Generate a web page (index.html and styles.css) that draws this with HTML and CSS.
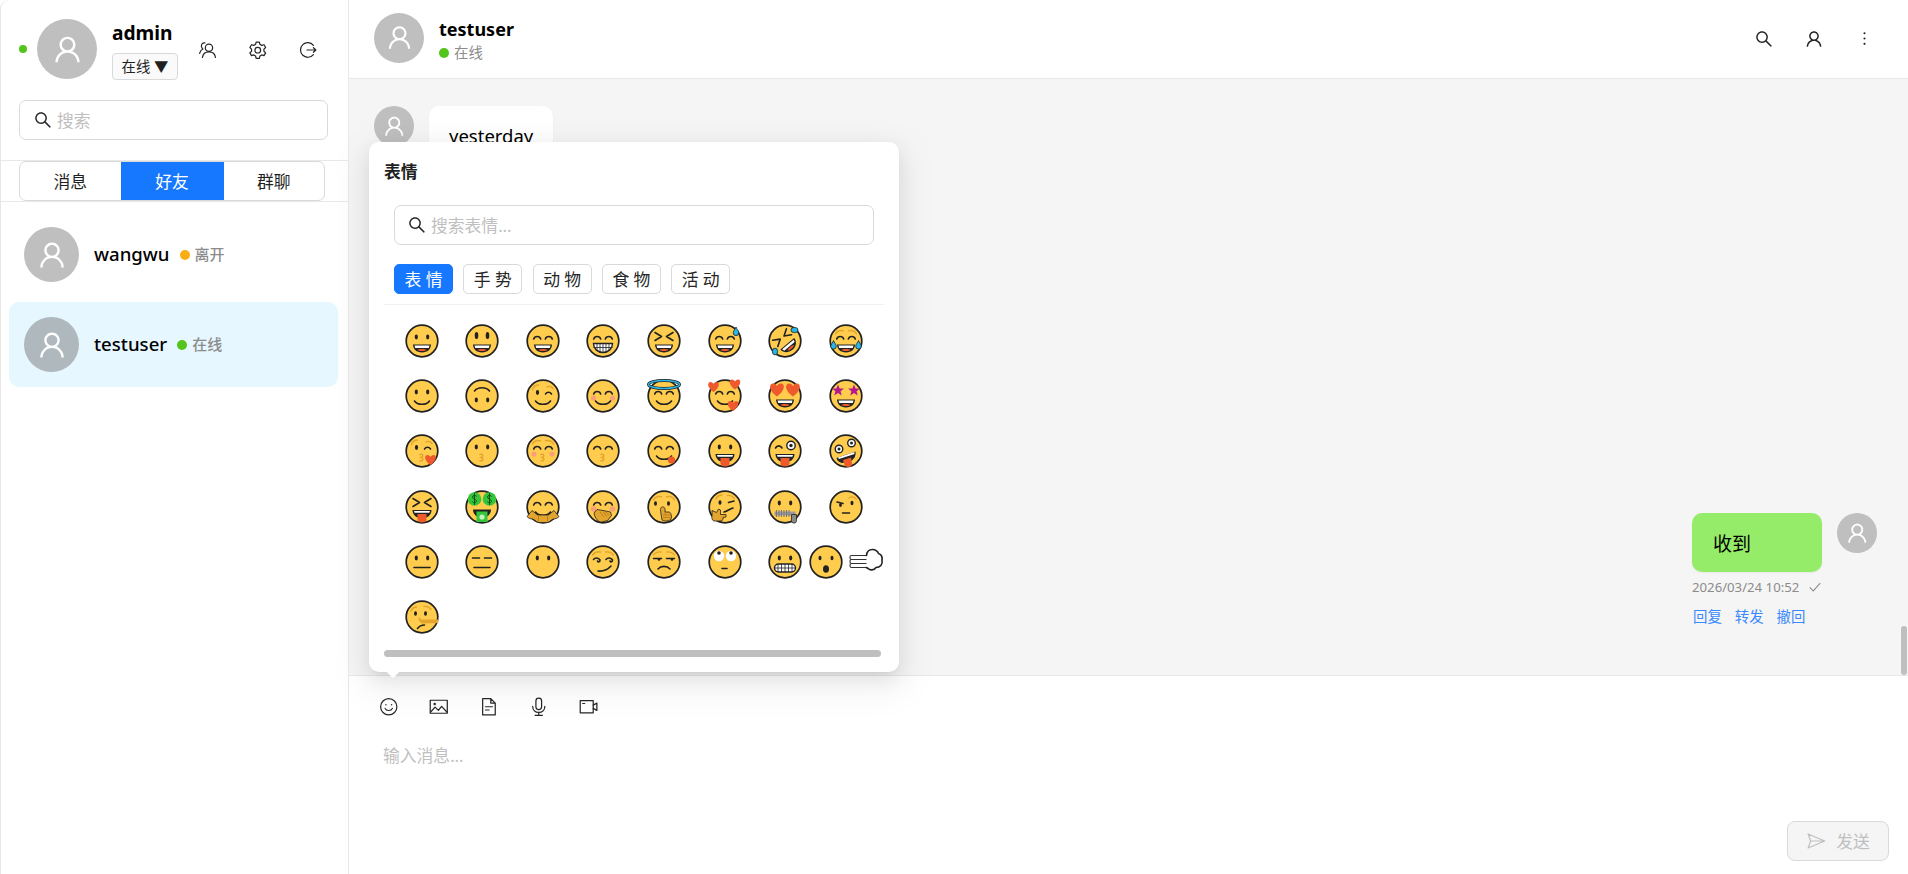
FILE: index.html
```html
<!DOCTYPE html>
<html lang="zh">
<head>
<meta charset="utf-8">
<title>聊天</title>
<link rel="stylesheet" href="styles.css">
</head>
<body>
<svg class="defs" aria-hidden="true" xmlns="http://www.w3.org/2000/svg">
<defs>
<path id="i-user" d="M858.5 763.6a374 374 0 0 0-80.6-119.5 375.63 375.63 0 0 0-119.5-80.6c-.4-.2-.8-.3-1.2-.5C719.5 518 760 444.7 760 362c0-137-111-248-248-248S264 225 264 362c0 82.7 40.5 156 102.8 201.1-.4.2-.8.3-1.2.5-44.8 18.9-85 46-119.5 80.6a375.63 375.63 0 0 0-80.6 119.5A371.7 371.7 0 0 0 136 901.8a8 8 0 0 0 8 8.2h60c4.4 0 7.9-3.5 8-7.8 2-77.2 33-149.5 87.8-204.3 56.7-56.7 132-87.9 212.2-87.9s155.5 31.2 212.2 87.9C779 752.7 810 825 812 902.2c.1 4.4 3.6 7.8 8 7.8h60a8 8 0 0 0 8-8.2c-1-47.8-10.9-94.3-29.5-138.2zM512 534c-45.9 0-89.1-17.9-121.6-50.4S340 407.9 340 362c0-45.9 17.9-89.1 50.4-121.6S466.1 190 512 190s89.1 17.9 121.6 50.4S684 316.1 684 362c0 45.9-17.9 89.1-50.4 121.6S557.9 534 512 534z"/>
<path id="i-search" d="M909.6 854.5L649.9 594.8C690.2 542.7 712 479 712 412c0-80.2-31.3-155.4-87.9-212.1-56.6-56.7-132-87.9-212.1-87.9s-155.5 31.3-212.1 87.9C143.2 256.5 112 331.8 112 412c0 80.1 31.3 155.5 87.9 212.1C256.5 680.8 331.8 712 412 712c67 0 130.6-21.8 182.7-62l259.7 259.6a8.2 8.2 0 0 0 11.6 0l43.6-43.5a8.2 8.2 0 0 0 0-11.6zM570.4 570.4C528 612.7 471.8 636 412 636s-116-23.3-158.4-65.6C211.3 528 188 471.8 188 412s23.3-116.1 65.6-158.4C296 211.3 352.2 188 412 188s116.1 23.2 158.4 65.6S636 352.2 636 412s-23.3 116.1-65.6 158.4z"/>

<circle id="f" class="em-face" cx="18" cy="18" r="15.8"/>
<g id="ed"><ellipse class="em-k" cx="12.3" cy="14" rx="1.6" ry="2.4"/><ellipse class="em-k" cx="23.7" cy="14" rx="1.6" ry="2.4"/></g>
<g id="ea"><path class="em-l" d="M8.7 16c1-3.4 6-3.4 7 0M20.3 16c1-3.4 6-3.4 7 0"/></g>
<g id="br"><path class="em-b" d="M7.5 11c1.5-3 5-4 8-3.2M28.5 11c-1.5-3-5-4-8-3.2"/></g>
<g id="mo"><path class="em-k" d="M9 21.5h18c0 4.400-3.500 8-9 8s-9-3.600-9-8z"/><path class="em-w" d="M10.500 22.500h15l-.7 2.400h-13.600z"/><path class="em-r" d="M13.500 27c1.500-1.400 7.500-1.400 9 0-1.500 1.300-7.500 1.300-9 0z"/></g>
<g id="sm"><path class="em-l" d="M10.500 23c3 4.400 12 4.400 15 0"/></g>
<g id="mt"><path class="em-k" d="M8.500 21h19c0 3.800-2.600 6.500-5 7.500h-9c-2.400-1-5-3.700-5-7.500z"/><path class="em-w" d="M10 22h16l-.6 1.800h-14.800z"/><path class="em-r" d="M13.500 25h9v5.500c0 2-2 3-4.500 3s-4.500-1-4.500-3z"/></g>
<path id="h" class="em-r" d="M0 5C-7 0-6-5-3-5-1.500-5-.5-4 0-3 .5-4 1.500-5 3-5 6-5 7 0 0 5z"/>
<polygon id="st" class="em-m" points="0,-6 1.600,-2 6,-1.900 2.600,.8 3.700,5 0,2.600 -3.700,5 -2.600,.8 -6,-1.900 -1.600,-2"/>
<path id="kiss" class="em-b" d="M16 21.500c3-.9 4 1.700 1 3 3.200 1 2 3.800-1 3.200"/>
<path id="xe" class="em-l" d="M9 9.500l6.500 4-6.500 4M27 9.500l-6.500 4 6.500 4"/>
<path id="dr" class="em-bl" d="M0-4C.5-2 2.800-.3 2.800 1.800a2.800 2.800 0 0 1-5.600 0C-2.800-.3-.5-2 0-4z"/>
<path id="dol" class="em-l2" d="M2-2.800C1-4.300-2-3.800-2-2S2 .5 2 2.200-1 4.500-2 2.800M0-5.500V5.500"/>

<g id="e1"><use href="#f"/><use href="#ed"/><use href="#mo"/></g>
<g id="e2"><use href="#f"/><ellipse class="em-k" cx="12.500" cy="12.500" rx="1.800" ry="3.600"/><ellipse class="em-k" cx="23.500" cy="12.500" rx="1.800" ry="3.600"/><use href="#mo"/></g>
<g id="e3"><use href="#f"/><use href="#ea"/><use href="#mo"/></g>
<g id="e4"><use href="#f"/><use href="#ea"/><path class="em-wl" d="M8.500 20.500h19c0 5-4 9-9.500 9s-9.500-4-9.500-9z"/><path class="em-t" d="M8.500 24.500h19M12 20.500v7.500M15 20.500v8.500M18 20.500v9M21 20.500v8.500M24 20.500v7.500"/></g>
<g id="e5"><use href="#f"/><use href="#xe"/><use href="#mo"/></g>
<g id="e6"><use href="#f"/><use href="#ea"/><use href="#mo"/><use href="#dr" transform="translate(29 8)"/></g>
<g id="e7"><use href="#f"/><g transform="rotate(-40 18 18)"><use href="#xe"/><use href="#mo"/></g><ellipse class="em-bl" cx="27.500" cy="7" rx="3.600" ry="2.600"/><ellipse class="em-bl" cx="8" cy="28.500" rx="2.600" ry="3.400"/></g>
<g id="e8"><use href="#f"/><use href="#br"/><use href="#ea"/><use href="#mo"/><use href="#dr" transform="translate(5.500 21.500)"/><use href="#dr" transform="translate(30.500 21.500)"/></g>

<g id="e9"><use href="#f"/><use href="#ed"/><use href="#sm"/></g>
<g id="e10"><use href="#f"/><g transform="rotate(180 18 18)"><use href="#ed"/><use href="#sm"/></g></g>
<g id="e11"><use href="#f"/><path class="em-b" d="M7.500 11.500c1-3 3.500-4.500 6-4.500M22 9c2-1 4.500-.5 6 1.500"/><ellipse class="em-k" cx="12.500" cy="14.500" rx="1.600" ry="2.400"/><path class="em-l" d="M20.500 16c1.500-2.400 4.500-2.400 6 0"/><use href="#sm"/></g>
<g id="e12"><use href="#f"/><circle class="em-c" cx="8.500" cy="20" r="2.600"/><circle class="em-c" cx="27.500" cy="20" r="2.600"/><use href="#ea"/><use href="#sm"/></g>
<g id="e13"><use href="#f"/><use href="#ea"/><use href="#sm"/><ellipse class="em-halo-o" cx="18" cy="6.500" rx="15.500" ry="4"/><ellipse class="em-halo" cx="18" cy="6.500" rx="15.500" ry="4"/></g>
<g id="e14"><use href="#f"/><use href="#ea"/><use href="#sm"/><use href="#h" transform="translate(6.500 9)"/><use href="#h" transform="translate(28 6.500)"/><use href="#h" transform="translate(26 28)"/></g>
<g id="e15"><use href="#f"/><use href="#h" transform="translate(10 12) scale(1.300)"/><use href="#h" transform="translate(26 12) scale(1.300)"/><use href="#mo"/></g>
<g id="e16"><use href="#f"/><use href="#st" transform="translate(10 12.500)"/><use href="#st" transform="translate(26 12.500)"/><use href="#mo"/></g>

<g id="e17"><use href="#f"/><path class="em-b" d="M7.500 11.500c1-3 3.500-4.500 6-4.500M22 9c2-1 4.500-.5 6 1.500"/><ellipse class="em-k" cx="12.500" cy="14.500" rx="1.600" ry="2.400"/><path class="em-l" d="M20.500 16c1.500-2.400 4.500-2.400 6 0"/><use href="#kiss"/><use href="#h" transform="translate(26.500 27)"/></g>
<g id="e18"><use href="#f"/><use href="#ed"/><use href="#kiss"/></g>
<g id="e19"><use href="#f"/><use href="#br"/><use href="#ea"/><circle class="em-c" cx="9" cy="21" r="2.600"/><circle class="em-c" cx="27" cy="21" r="2.600"/><use href="#kiss"/></g>
<g id="e20"><use href="#f"/><use href="#ea"/><use href="#kiss"/></g>
<g id="e21"><use href="#f"/><use href="#ea"/><use href="#sm"/><circle class="em-r" cx="25.500" cy="27" r="3.600"/></g>
<g id="e22"><use href="#f"/><use href="#ed"/><use href="#mt"/></g>
<g id="e23"><use href="#f"/><path class="em-l" d="M8.500 15c1.500-2.800 5-2.800 6.500 0"/><circle class="em-wl" cx="24" cy="12.500" r="4.200"/><circle class="em-k" cx="24" cy="12.500" r="1.700"/><use href="#mt"/></g>
<g id="e24"><use href="#f"/><circle class="em-wl" cx="11" cy="16" r="3.800"/><circle class="em-k" cx="11" cy="16" r="1.500"/><circle class="em-wl" cx="23.500" cy="10" r="3.800"/><circle class="em-k" cx="23.500" cy="10" r="1.500"/><path class="em-k" d="M8.500 25l19-6.500c.8 4.500-2 8.500-5.500 10l-8 1.500c-3-.5-5-2.500-5.500-5z"/><path class="em-w" d="M10 24.500l16.300-5.400.2 2-15.500 5z"/><path class="em-r" d="M15 27l8-2.500 1 6c.3 2-1.500 3.500-3.800 3.500s-3.700-1-4-3z"/></g>

<g id="e25"><use href="#f"/><use href="#xe"/><use href="#mt"/></g>
<g id="e26"><use href="#f"/><circle class="em-g" cx="10.500" cy="10" r="6.800"/><circle class="em-g" cx="25.500" cy="10" r="6.800"/><use href="#dol" transform="translate(10.500 10)"/><use href="#dol" transform="translate(25.500 10)"/><path class="em-k" d="M9 20.500h18c0 3-1.500 5.500-4 7h-10c-2.500-1.500-4-4-4-7z"/><path class="em-g2" d="M12.500 22.500h11v10.500h-11z"/><circle class="em-g3" cx="18" cy="28" r="2.600"/></g>
<g id="e27"><use href="#f"/><use href="#ea"/><use href="#sm"/><path class="em-hand" d="M2 27.500l5-6 5.500 4.500h11l5.500-4.500 5 6c-1.500 2-4 2.500-6 2.500l-5 3.500h-10l-5-3.500c-2 0-4.500-.5-6-2.500z"/><path class="em-hl" d="M13.500 26v7M22.500 26v7"/></g>
<g id="e28"><use href="#f"/><circle class="em-c" cx="8.500" cy="20" r="2.800"/><circle class="em-c" cx="27.500" cy="20" r="2.800"/><use href="#ea"/><path class="em-hand" d="M9 24l3-3.500 6 1 7.500 1.500 1 3.500-4 5-6 1.500c-3 0-6.500-3-7.500-9z"/><path class="em-hl" d="M15 23l4 5M18 22.500l4 5M21 23l3 3.500"/></g>
<g id="e29"><use href="#f"/><use href="#br"/><ellipse class="em-k" cx="9.500" cy="14.500" rx="1.500" ry="2.300"/><ellipse class="em-k" cx="22.500" cy="14.500" rx="1.500" ry="2.300"/><path class="em-hand" d="M14.500 20.500c0-3.500 4.500-3.500 4.500 0v2.500h4.500c2 1.500 2.500 5 1.500 7.500-3 2-7 2-9 .5l-1-6z"/><path class="em-hl" d="M19 23v2.500M17 26h8M17 28.500h8"/></g>
<g id="e30"><use href="#f"/><path class="em-b" d="M9 10c1-2.500 3-4 6-4M20.500 6.500c3-.5 5.500 1 7 3"/><ellipse class="em-k" cx="13" cy="13.500" rx="1.500" ry="2.300"/><path class="em-l" d="M21.500 13.500l5.500-1.500M17 23c3-.5 5.500-3 9-4"/><path class="em-hand" d="M5 21.500l4.500 2 2-3.500 2 1v4.500h5.500v2.500l-3 .5v2l-2 1.500H7c-2-.5-2.500-3-2-5.500z"/></g>
<g id="e31"><use href="#f"/><use href="#ed"/><path class="em-zip" d="M7.500 22.500h21v4h-21z"/><path class="em-zt" d="M9.500 21v7M12 21v7M14.500 21v7M17 21v7M19.500 21v7M22 21v7"/><path class="em-zp" d="M24.500 25.500h5v6c0 2-1 2.500-2.500 2.500s-2.500-.5-2.500-2.500z"/></g>
<g id="e32"><use href="#f"/><path class="em-b" d="M21 9c2-1.500 5-1.500 7 1"/><path class="em-l" d="M9 13l6 1.500"/><ellipse class="em-k" cx="12.500" cy="16" rx="1.400" ry="2"/><ellipse class="em-k" cx="24" cy="14" rx="1.500" ry="2.200"/><path class="em-l" d="M14.500 24h7"/></g>

<g id="e33"><use href="#f"/><use href="#ed"/><path class="em-l" d="M10 23.500h16"/></g>
<g id="e34"><use href="#f"/><path class="em-l" d="M8.500 14h7M20.500 14h7M10 23.500h16"/></g>
<g id="e35"><use href="#f"/><use href="#ed"/></g>
<g id="e36"><use href="#f"/><path class="em-b" d="M7.500 11c2-2.500 5.500-3.500 8-3M20.500 8c3-.5 6 .5 8 3"/><path class="em-l" d="M8.500 15.500c1.500-2 5-2 6.500.5 0 2-1.700 2.500-2.500 1M21 15.500c1.500-2 5-2 6.500.5 0 2-1.700 2.500-2.500 1M13 27c5.500.5 9.500-1 13-5"/></g>
<g id="e37"><use href="#f"/><path class="em-b" d="M7.500 11c1.500-2.500 5-3.500 7.500-3M21 8c2.500-.5 6 .5 7.500 3"/><path class="em-l" d="M7.500 14.500h8M20.500 14.500h8M12 25c3-3.500 9-3.500 12 0"/><circle class="em-k" cx="13" cy="15.500" r="1.300"/><circle class="em-k" cx="26" cy="15.500" r="1.300"/></g>
<g id="e38"><use href="#f"/><circle class="em-w" cx="12" cy="12" r="5.200"/><circle class="em-w" cx="24" cy="12" r="5.200"/><circle class="em-k" cx="12" cy="9" r="1.800"/><circle class="em-k" cx="24" cy="9" r="1.800"/><path class="em-l" d="M15 24.500h5"/></g>
<g id="e39"><use href="#f"/><use href="#ed"/><rect class="em-wl" x="7.500" y="20" width="21" height="8" rx="4"/><path class="em-t" d="M7.500 24h21M11 20v8M14.500 20v8M18 20v8M21.500 20v8M25 20v8"/></g>
<g id="e40"><use href="#f"/><ellipse class="em-k" cx="12" cy="14" rx="1.500" ry="2.300"/><ellipse class="em-k" cx="24" cy="14" rx="1.500" ry="2.300"/><ellipse class="em-k" cx="18" cy="25" rx="3" ry="3.800"/></g>
<g id="e41"><rect class="em-bar" x="2" y="11.500" width="18" height="4" rx="1.500"/><rect class="em-bar" x="2" y="15.500" width="18" height="4" rx="1.500"/><rect class="em-bar" x="2" y="19.500" width="18" height="4" rx="1.500"/><path class="em-cloud" d="M18.500 11.500c.3-3.500 2.500-6 6-6s5 1.500 6 4c3 1 4 4 3.500 7 1 4-2 7-6 7-2 3-6 3-8 1-.7-.5-1.200-.6-1.500-1"/></g>
<g id="e42"><use href="#f"/><path class="em-b" d="M7 12c1-2.500 3-4 5.500-4M20 7.500c3-.5 5.500 .5 7 3"/><ellipse class="em-k" cx="11.500" cy="14.500" rx="1.500" ry="2.300"/><ellipse class="em-k" cx="21.500" cy="14.500" rx="1.500" ry="2.300"/><path class="em-nose" d="M14.500 18l3 2.500h16.500l.5 2-.5 1.500-16 .5-3-2.500z"/><path class="em-l" d="M13.500 29.500c1.500-2 4-3.500 7-3.500"/></g>
</defs>
</svg>

<div class="app">
  <aside class="sidebar">
    <div class="profile">
      <span class="dot dot--online"></span>
      <span class="avatar avatar--lg"><svg class="avatar-icon" viewBox="0 0 1024 1024"><use href="#i-user"/></svg></span>
      <div class="profile-info">
        <div class="profile-name">admin</div>
        <div class="status-select">在线 ▼</div>
      </div>
      <div class="profile-actions">
        <span class="icon-btn"><svg class="line-icon" viewBox="0 0 24 24"><circle cx="13.500" cy="9.500" r="4.500"/><path d="M5.500 21.500c.5-4.500 3.500-7 8-7s7.500 2.500 8 7M8.500 3.500C6 3 3.800 5 4.200 8c.2 1.300.9 2.300 1.800 3-2 1-3.500 3-4 5.500"/></svg></span>
        <span class="icon-btn"><svg class="line-icon" viewBox="0 0 24 24"><path d="M10 2.500h4l.7 2.800 2.200 1.300 2.800-.8 2 3.400-2.100 2v2.600l2.100 2-2 3.400-2.800-.8-2.200 1.300-.7 2.800h-4l-.7-2.800-2.200-1.300-2.800.8-2-3.400 2.100-2v-2.600l-2.100-2 2-3.400 2.800.8 2.200-1.300z"/><circle cx="12" cy="12.500" r="3.500"/></svg></span>
        <span class="icon-btn"><svg class="line-icon" viewBox="0 0 24 24"><path d="M19 6.500A9 9 0 1 0 19 18M11 12.300h11M19 9.500l3 2.800-3 2.800"/></svg></span>
      </div>
    </div>
    <div class="search-wrap">
      <div class="search-box"><svg class="search-icon" viewBox="0 0 1024 1024"><use href="#i-search"/></svg><span class="placeholder">搜索</span></div>
    </div>
    <div class="tabs-wrap">
      <div class="tabs">
        <div class="tab">消息</div>
        <div class="tab tab--active">好友</div>
        <div class="tab">群聊</div>
      </div>
    </div>
    <div class="contact-list">
      <div class="contact">
        <span class="avatar avatar--md"><svg class="avatar-icon" viewBox="0 0 1024 1024"><use href="#i-user"/></svg></span>
        <span class="contact-name">wangwu</span>
        <span class="dot dot--away dot--contact"></span>
        <span class="contact-status">离开</span>
      </div>
      <div class="contact contact--active">
        <span class="avatar avatar--md avatar--tint"><svg class="avatar-icon" viewBox="0 0 1024 1024"><use href="#i-user"/></svg></span>
        <span class="contact-name">testuser</span>
        <span class="dot dot--online-md dot--contact"></span>
        <span class="contact-status">在线</span>
      </div>
    </div>
  </aside>

  <main class="main">
    <header class="chat-header">
      <span class="avatar avatar--hd"><svg class="avatar-icon" viewBox="0 0 1024 1024"><use href="#i-user"/></svg></span>
      <div class="chat-title">
        <div class="chat-name">testuser</div>
        <div class="chat-status"><span class="dot dot--online-md"></span>在线</div>
      </div>
      <div class="chat-actions">
        <span class="icon-btn"><svg class="fill-icon" viewBox="0 0 1024 1024"><use href="#i-search"/></svg></span>
        <span class="icon-btn"><svg class="fill-icon" viewBox="0 0 1024 1024"><use href="#i-user"/></svg></span>
        <span class="icon-btn"><svg class="more-icon" viewBox="0 0 24 24"><circle cx="12" cy="4.500" r="1.500"/><circle cx="12" cy="12" r="1.500"/><circle cx="12" cy="19.500" r="1.500"/></svg></span>
      </div>
    </header>

    <section class="messages">
      <div class="msg">
        <span class="avatar avatar--sm"><svg class="avatar-icon" viewBox="0 0 1024 1024"><use href="#i-user"/></svg></span>
        <div class="bubble">yesterday</div>
      </div>
      <div class="msg msg--self">
        <div class="msg-body">
          <div class="bubble bubble--self">收到</div>
          <div class="msg-meta"><span>2026/03/24 10:52</span><svg class="check" viewBox="0 0 16 16"><path d="M2 8.500l4 4 8-9"/></svg></div>
          <div class="msg-actions"><span>回复</span><span>转发</span><span>撤回</span></div>
        </div>
        <span class="avatar avatar--sm"><svg class="avatar-icon" viewBox="0 0 1024 1024"><use href="#i-user"/></svg></span>
      </div>
      <div class="scroll-thumb"></div>
    </section>

    <section class="composer">
      <div class="toolbar">
        <span class="tool"><svg class="line-icon" viewBox="0 0 24 24"><circle cx="12" cy="12" r="10"/><path d="M7.500 14c1.500 3.500 7.500 3.500 9 0"/><circle class="dot-fill" cx="8.500" cy="9.500" r=".9"/><circle class="dot-fill" cx="15.500" cy="9.500" r=".9"/></svg></span>
        <span class="tool"><svg class="line-icon" viewBox="0 0 24 24"><rect x="1.500" y="4" width="21" height="16"/><path d="M2 18.500l5.500-6 4 4 4-5 6.500 7"/><circle class="dot-fill" cx="7" cy="8.500" r="1.500"/></svg></span>
        <span class="tool"><svg class="line-icon" viewBox="0 0 24 24"><path d="M4.500 2h10l5.500 5.500V22H4.500zM14.500 2v5.500H20M8 12h8.500M8 16h4.500"/></svg></span>
        <span class="tool"><svg class="line-icon" viewBox="0 0 24 24"><rect x="8.500" y="1.500" width="7" height="14" rx="3.500"/><path d="M4.500 11.500c0 4.500 3.200 7.500 7.500 7.500s7.500-3 7.500-7.500M12 19v3M7.500 22.500h9"/></svg></span>
        <span class="tool"><svg class="line-icon" viewBox="0 0 24 24"><rect x="1.500" y="4.500" width="16" height="15"/><path d="M17.500 10l4.500-2.500v9L17.500 14M4.500 8h2.500"/></svg></span>
      </div>
      <div class="composer-input">输入消息...</div>
      <div class="composer-foot">
        <div class="send-btn"><svg class="send-icon" viewBox="0 0 24 24"><path d="M2.500 3.500l20 8.500-20 8.500 3-8.500zM5.500 12h17"/></svg><span>发送</span></div>
      </div>
    </section>

    <div class="popup">
      <div class="popup-title">表情</div>
      <div class="popup-search">
        <div class="search-box search-box--popup"><svg class="search-icon" viewBox="0 0 1024 1024"><use href="#i-search"/></svg><span class="placeholder">搜索表情...</span></div>
      </div>
      <div class="cats">
        <span class="cat cat--active">表 情</span>
        <span class="cat">手 势</span>
        <span class="cat">动 物</span>
        <span class="cat">食 物</span>
        <span class="cat">活 动</span>
      </div>
      <div class="emoji-list">
        <div class="emoji-row">
          <span class="emoji-cell"><svg class="emoji" viewBox="0 0 36 36"><use href="#e1"/></svg></span>
          <span class="emoji-cell"><svg class="emoji" viewBox="0 0 36 36"><use href="#e2"/></svg></span>
          <span class="emoji-cell"><svg class="emoji" viewBox="0 0 36 36"><use href="#e3"/></svg></span>
          <span class="emoji-cell"><svg class="emoji" viewBox="0 0 36 36"><use href="#e4"/></svg></span>
          <span class="emoji-cell"><svg class="emoji" viewBox="0 0 36 36"><use href="#e5"/></svg></span>
          <span class="emoji-cell"><svg class="emoji" viewBox="0 0 36 36"><use href="#e6"/></svg></span>
          <span class="emoji-cell"><svg class="emoji" viewBox="0 0 36 36"><use href="#e7"/></svg></span>
          <span class="emoji-cell"><svg class="emoji" viewBox="0 0 36 36"><use href="#e8"/></svg></span>
        </div>
        <div class="emoji-row">
          <span class="emoji-cell"><svg class="emoji" viewBox="0 0 36 36"><use href="#e9"/></svg></span>
          <span class="emoji-cell"><svg class="emoji" viewBox="0 0 36 36"><use href="#e10"/></svg></span>
          <span class="emoji-cell"><svg class="emoji" viewBox="0 0 36 36"><use href="#e11"/></svg></span>
          <span class="emoji-cell"><svg class="emoji" viewBox="0 0 36 36"><use href="#e12"/></svg></span>
          <span class="emoji-cell"><svg class="emoji" viewBox="0 0 36 36"><use href="#e13"/></svg></span>
          <span class="emoji-cell"><svg class="emoji" viewBox="0 0 36 36"><use href="#e14"/></svg></span>
          <span class="emoji-cell"><svg class="emoji" viewBox="0 0 36 36"><use href="#e15"/></svg></span>
          <span class="emoji-cell"><svg class="emoji" viewBox="0 0 36 36"><use href="#e16"/></svg></span>
        </div>
        <div class="emoji-row">
          <span class="emoji-cell"><svg class="emoji" viewBox="0 0 36 36"><use href="#e17"/></svg></span>
          <span class="emoji-cell"><svg class="emoji" viewBox="0 0 36 36"><use href="#e18"/></svg></span>
          <span class="emoji-cell"><svg class="emoji" viewBox="0 0 36 36"><use href="#e19"/></svg></span>
          <span class="emoji-cell"><svg class="emoji" viewBox="0 0 36 36"><use href="#e20"/></svg></span>
          <span class="emoji-cell"><svg class="emoji" viewBox="0 0 36 36"><use href="#e21"/></svg></span>
          <span class="emoji-cell"><svg class="emoji" viewBox="0 0 36 36"><use href="#e22"/></svg></span>
          <span class="emoji-cell"><svg class="emoji" viewBox="0 0 36 36"><use href="#e23"/></svg></span>
          <span class="emoji-cell"><svg class="emoji" viewBox="0 0 36 36"><use href="#e24"/></svg></span>
        </div>
        <div class="emoji-row">
          <span class="emoji-cell"><svg class="emoji" viewBox="0 0 36 36"><use href="#e25"/></svg></span>
          <span class="emoji-cell"><svg class="emoji" viewBox="0 0 36 36"><use href="#e26"/></svg></span>
          <span class="emoji-cell"><svg class="emoji" viewBox="0 0 36 36"><use href="#e27"/></svg></span>
          <span class="emoji-cell"><svg class="emoji" viewBox="0 0 36 36"><use href="#e28"/></svg></span>
          <span class="emoji-cell"><svg class="emoji" viewBox="0 0 36 36"><use href="#e29"/></svg></span>
          <span class="emoji-cell"><svg class="emoji" viewBox="0 0 36 36"><use href="#e30"/></svg></span>
          <span class="emoji-cell"><svg class="emoji" viewBox="0 0 36 36"><use href="#e31"/></svg></span>
          <span class="emoji-cell"><svg class="emoji" viewBox="0 0 36 36"><use href="#e32"/></svg></span>
        </div>
        <div class="emoji-row">
          <span class="emoji-cell"><svg class="emoji" viewBox="0 0 36 36"><use href="#e33"/></svg></span>
          <span class="emoji-cell"><svg class="emoji" viewBox="0 0 36 36"><use href="#e34"/></svg></span>
          <span class="emoji-cell"><svg class="emoji" viewBox="0 0 36 36"><use href="#e35"/></svg></span>
          <span class="emoji-cell"><svg class="emoji" viewBox="0 0 36 36"><use href="#e36"/></svg></span>
          <span class="emoji-cell"><svg class="emoji" viewBox="0 0 36 36"><use href="#e37"/></svg></span>
          <span class="emoji-cell"><svg class="emoji" viewBox="0 0 36 36"><use href="#e38"/></svg></span>
          <span class="emoji-cell"><svg class="emoji" viewBox="0 0 36 36"><use href="#e39"/></svg></span>
          <span class="emoji-cell emoji-cell--tight emoji-cell--pull"><svg class="emoji" viewBox="0 0 36 36"><use href="#e40"/></svg></span>
          <span class="emoji-cell emoji-cell--tight"><svg class="emoji" viewBox="0 0 36 36"><use href="#e41"/></svg></span>
        </div>
        <div class="emoji-row">
          <span class="emoji-cell"><svg class="emoji" viewBox="0 0 36 36"><use href="#e42"/></svg></span>
        </div>
      </div>
      <div class="popup-scroll"><div class="popup-scroll-thumb"></div></div>
      <span class="popup-arrow"></span>
    </div>
  </main>
</div>
</body>
</html>
```

FILE: styles.css
```css
* { box-sizing: border-box; }
html, body { margin: 0; height: 100%; background: #fff; overflow: hidden; }
body {
  font-family: "Noto Sans", "Noto Sans CJK SC", sans-serif;
  font-size: 16.8px;
  color: #000;
}
.defs { display: block; width: 0; height: 0; }

.app { display: flex; height: 874px; overflow: hidden; border-radius: 9px 9px 0 0; box-shadow: inset 1px 0 0 #e6e6e6; }

/* ---------- sidebar ---------- */
.sidebar { width: 349px; flex: none; border-right: 1px solid #e8e8e8; display: flex; flex-direction: column; }
.profile { display: flex; align-items: center; height: 100px; padding: 0 0 2px 19px; }
.profile-info { margin: 2px 0 0 15px; width: 66px; display: flex; flex-direction: column; gap: 8px; }
.profile-name { font-weight: 700; font-size: 19.2px; line-height: 25px; }
.status-select {
  height: 27px; line-height: 25px; border: 1px solid #d9d9d9; border-radius: 4px; background: #fafafa;
  font-size: 14.4px; text-align: center; color: #1f1f1f; white-space: nowrap;
}
.profile-actions { display: flex; margin: 2px 0 0 5px; }
.icon-btn { width: 50px; display: flex; justify-content: center; align-items: center; }
.line-icon { width: 19.5px; height: 19.5px; fill: none; stroke: #262626; stroke-width: 1.5; stroke-linejoin: round; stroke-linecap: round; }
.line-icon .dot-fill { fill: #262626; stroke: none; }
.fill-icon { width: 20px; height: 20px; fill: #262626; }
.more-icon { width: 17px; height: 17px; fill: #262626; }

.avatar { display: flex; align-items: center; justify-content: center; border-radius: 50%; background: #bfbfbf; flex: none; }
.avatar-icon { fill: #fff; }
.avatar--lg { width: 60px; height: 60px; margin-left: 10px; }
.avatar--lg .avatar-icon { width: 33px; height: 33px; }
.avatar--md { width: 55px; height: 55px; }
.avatar--md .avatar-icon { width: 32px; height: 32px; }
.avatar--hd { width: 50px; height: 50px; }
.avatar--hd .avatar-icon { width: 29px; height: 29px; }
.avatar--sm { width: 40px; height: 40px; }
.avatar--sm .avatar-icon { width: 24.5px; height: 24.5px; }
.avatar--tint { background: #aeb8bd; }

.dot { display: inline-block; border-radius: 50%; flex: none; }
.dot--online { width: 8px; height: 8px; background: #52c41a; }
.dot--online-md { width: 10px; height: 10px; background: #52c41a; }
.dot--away { width: 10px; height: 10px; background: #faad14; }

.search-wrap { padding: 0 20px 20.5px 19px; }
.search-box {
  height: 39.5px; display: flex; align-items: center; gap: 4px; padding: 0 13px;
  border: 1px solid #d9d9d9; border-radius: 7px; background: #fff;
}
.search-box--popup { padding: 0 12px; }
.search-icon { width: 20px; height: 20px; fill: #262626; flex: none; }
.placeholder { color: #bfbfbf; font-size: 16.8px; }

.tabs-wrap { border-top: 1px solid #e8e8e8; border-bottom: 1px solid #e8e8e8; padding: 0 23px 0 19px; height: 42px; }
.tabs { display: flex; height: 40px; border: 1px solid #d9d9d9; border-radius: 7px; overflow: hidden; }
.tab { flex: 1; display: flex; align-items: center; justify-content: center; font-size: 16.8px; color: #1f1f1f; }
.tab--active { background: #1677ff; color: #fff; flex: none; width: 103px; }

.contact-list { padding: 10px 0 0 9px; display: flex; flex-direction: column; gap: 5px; }
.contact { width: 329px; height: 85px; display: flex; align-items: center; padding-left: 15px; border-radius: 10px; }
.contact--active { background: #e6f7ff; }
.contact-name { margin: 0 0 2px 15px; font-size: 18.6px; font-weight: 500; }
.dot--contact { margin-left: 10px; }
.contact-status { margin: 0 0 2px 5px; font-size: 15px; font-weight: 500; color: #8c8c8c; }

/* ---------- main ---------- */
.main { flex: 1; min-width: 0; display: flex; flex-direction: column; position: relative; }
.chat-header { height: 79px; flex: none; display: flex; align-items: center; padding: 0 19px 3px 25px; border-bottom: 1px solid #e8e8e8; }
.chat-title { margin: 5px 0 0 15px; display: flex; flex-direction: column; }
.chat-name { font-weight: 700; font-size: 18px; line-height: 25px; }
.chat-status { display: flex; align-items: center; gap: 5px; font-size: 14.4px; line-height: 22px; color: #8c8c8c; }
.chat-actions { display: flex; margin: 2px 0 0 auto; }

.messages {
  flex: 1; min-height: 0; background: #f5f5f5; position: relative;
  display: flex; flex-direction: column; justify-content: space-between;
  padding: 27px 31px 48px 25px;
}
.msg { display: flex; gap: 15px; align-items: flex-start; }
.msg--self { justify-content: flex-end; }
.msg-body { display: flex; flex-direction: column; }
.bubble {
  height: 59px; display: flex; align-items: center; padding: 0 20px; background: #fff; border-radius: 10px;
  font-size: 18.5px; box-shadow: 0 1px 2px rgba(0,0,0,.05);
}
.bubble--self { width: 130px; background: #95ec69; padding: 0 21px; font-size: 19px; }
.msg-meta { display: flex; align-items: center; justify-content: space-between; margin-top: 5px; font-size: 13.2px; line-height: 20px; color: #8c8c8c; }
.check { width: 14px; height: 14px; fill: none; stroke: #8c8c8c; stroke-width: 1.2; }
.msg-actions { display: flex; gap: 13px; margin-top: 10px; padding-left: 1px; font-size: 14.4px; line-height: 20px; color: #1677ff; opacity: .85; }
.scroll-thumb { position: absolute; right: 1px; bottom: 0; width: 6px; height: 49px; background: #bfbfbf; border-radius: 3px; }

.composer { height: 199px; flex: none; border-top: 1px solid #e8e8e8; display: flex; flex-direction: column; background: #fff; }
.toolbar { display: flex; padding: 14px 0 0 15px; }
.tool { width: 50px; height: 34px; display: flex; align-items: center; justify-content: center; }
.composer-input { padding: 15px 0 0 34px; font-size: 16.8px; line-height: 34px; color: #bfbfbf; }
.composer-foot { margin-top: auto; display: flex; justify-content: flex-end; padding: 0 19px 13px 0; }
.send-btn {
  width: 102px; height: 40px; display: flex; align-items: center; justify-content: center; gap: 10px;
  background: #f5f5f5; border: 1px solid #d9d9d9; border-radius: 8px; color: #bfbfbf; font-size: 16.8px;
}
.send-icon { width: 20px; height: 20px; fill: none; stroke: #bfbfbf; stroke-width: 1.4; stroke-linejoin: round; }

/* ---------- popup ---------- */
.popup {
  position: absolute; left: 20px; top: 142px; width: 530px; height: 530px; background: #fff; border-radius: 10px; z-index: 10;
  box-shadow: 0 7px 19px rgba(0,0,0,.08), 0 4px 7px -5px rgba(0,0,0,.12), 0 11px 34px 10px rgba(0,0,0,.05);
}
.popup-title { padding: 17px 0 0 15px; font-size: 16.8px; font-weight: 700; line-height: 25px; color: #1f1f1f; }
.popup-search { padding: 21px 25px 0 25px; }
.cats { display: flex; gap: 10.3px; margin: 19.5px 15px 0; padding: 0 10px 10px; border-bottom: 1px solid #f0f0f0; height: 41px; }
.cat {
  height: 30px; width: 59px; display: flex; align-items: center; justify-content: center; border: 1px solid #d9d9d9; border-radius: 5px;
  font-size: 16.8px; color: #262626; white-space: pre;
}
.cat--active { background: #1677ff; border-color: #1677ff; color: #fff; }
.emoji-list { padding: 8.5px 0 0 22.4px; }
.emoji-row { display: flex; height: 55.2px; align-items: center; }
.emoji-cell { width: 60.6px; flex: none; display: flex; justify-content: center; align-items: center; }
.emoji-cell--tight { width: 40.4px; }
.emoji-cell--pull { margin-left: -9.8px; }
.emoji { width: 36px; height: 36px; display: block; overflow: visible; }

.popup-scroll { margin: 5.3px 15px 0; height: 7px; }
.popup-scroll-thumb { width: 497px; height: 7px; border-radius: 4px; background: #bfbfbf; }
.popup-arrow { position: absolute; left: 17px; bottom: -6px; width: 14px; height: 14px; background: #fff; transform: rotate(45deg) scale(.72); }

/* ---------- emoji paint ---------- */
.em-face { fill: #ffcc4d; stroke: #222; stroke-width: 1.7; }
.em-k { fill: #222; }
.em-w { fill: #fff; }
.em-r { fill: #ee5a2c; }
.em-m { fill: #b5178e; }
.em-c { fill: #f9a07a; }
.em-g { fill: #35c53a; }
.em-g2 { fill: #35c53a; }
.em-g3 { fill: #c6f0c0; }
.em-l { fill: none; stroke: #222; stroke-width: 1.6; stroke-linecap: round; stroke-linejoin: round; }
.em-l2 { fill: none; stroke: #14501a; stroke-width: 1; stroke-linecap: round; }
.em-b { fill: none; stroke: #e3a52e; stroke-width: 1.4; stroke-linecap: round; }
.em-bl { fill: #29b6e8; stroke: #222; stroke-width: .8; }
.em-wl { fill: #fff; stroke: #222; stroke-width: 1.4; }
.em-t { fill: none; stroke: #222; stroke-width: .8; }
.em-halo-o { fill: none; stroke: #222; stroke-width: 3; }
.em-halo { fill: none; stroke: #29b6e8; stroke-width: 1.5; }
.em-hand { fill: #e3a52e; stroke: #222; stroke-width: .8; stroke-linejoin: round; }
.em-hl { fill: none; stroke: #b67f1c; stroke-width: .9; }
.em-zip { fill: #9a9a9a; }
.em-zt { fill: none; stroke: #777; stroke-width: 1; }
.em-zp { fill: #8a8a8a; stroke: #222; stroke-width: .8; }
.em-cloud { fill: #fff; stroke: #222; stroke-width: 1.6; stroke-linejoin: round; stroke-linecap: round; }
.em-bar { fill: #fff; stroke: #333; stroke-width: 1.1; }
.em-nose { fill: #e3a52e; stroke: none; }
```
